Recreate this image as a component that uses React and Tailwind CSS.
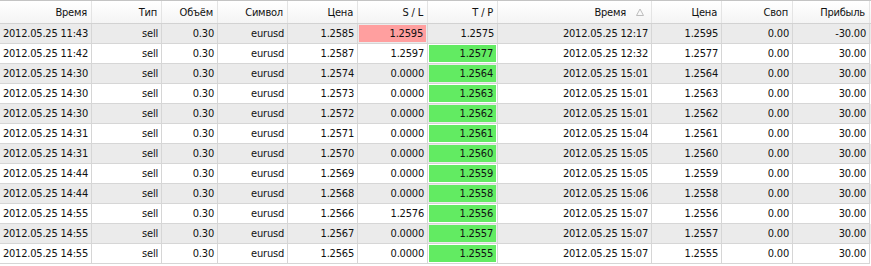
const cols = [
  { title: "Время", w: "w-[92px]" },
  { title: "Тип", w: "w-[70px]" },
  { title: "Объём", w: "w-[56px]" },
  { title: "Символ", w: "w-[70px]" },
  { title: "Цена", w: "w-[70px]" },
  { title: "S / L", w: "w-[70px]" },
  { title: "T / P", w: "w-[70px]" },
  { title: "Время", w: "w-[154px]", sorted: true },
  { title: "Цена", w: "w-[70px]" },
  { title: "Своп", w: "w-[71px]" },
  { title: "Прибыль", w: "w-[77px]" },
];

const trades = [
  ["11:43", "1.2585", "1.2595", "1.2575", "12:17", "1.2595", "-30.00", "sl"],
  ["11:42", "1.2587", "1.2597", "1.2577", "12:32", "1.2577", "30.00", "tp"],
  ["14:30", "1.2574", "0.0000", "1.2564", "15:01", "1.2564", "30.00", "tp"],
  ["14:30", "1.2573", "0.0000", "1.2563", "15:01", "1.2563", "30.00", "tp"],
  ["14:30", "1.2572", "0.0000", "1.2562", "15:01", "1.2562", "30.00", "tp"],
  ["14:31", "1.2571", "0.0000", "1.2561", "15:04", "1.2561", "30.00", "tp"],
  ["14:31", "1.2570", "0.0000", "1.2560", "15:05", "1.2560", "30.00", "tp"],
  ["14:44", "1.2569", "0.0000", "1.2559", "15:05", "1.2559", "30.00", "tp"],
  ["14:44", "1.2568", "0.0000", "1.2558", "15:06", "1.2558", "30.00", "tp"],
  ["14:55", "1.2566", "1.2576", "1.2556", "15:07", "1.2556", "30.00", "tp"],
  ["14:55", "1.2567", "0.0000", "1.2557", "15:07", "1.2557", "30.00", "tp"],
  ["14:55", "1.2565", "0.0000", "1.2555", "15:07", "1.2555", "30.00", "tp"],
];

function Cell({ w, children, hit }) {
  return (
    <div className={`${w} h-5 shrink-0 border-r border-b border-[#d6d6d6] flex`}>
      <div
        className={`flex-1 flex items-center justify-end pr-[3px] whitespace-nowrap ${
          hit === "sl" ? "m-px bg-[#ff9f9f]" : hit === "tp" ? "m-px bg-[#62eb62]" : "px-px"
        }`}
      >
        {children}
      </div>
    </div>
  );
}

export default function App() {
  return (
    <div className="w-[871px] h-[266px] bg-white text-[11px] tracking-[-0.2px] text-[#111] font-['DejaVu_Sans_Condensed','DejaVu_Sans',sans-serif] leading-none">
      <div className="flex h-6 border-t border-[#c4c4c4] border-b border-b-[#d2d2d2] bg-gradient-to-b from-white to-[#f4f4f4]">
        {cols.map((c, i) => (
          <div key={i} className={`${c.w} shrink-0 border-r border-[#e4e4e4] flex items-center justify-end pr-1 whitespace-nowrap`}>
            <span>{c.title}</span>
            {c.sorted && (
              <svg width="8" height="8" viewBox="0 0 8 8" className="ml-[10px] mr-[3px]">
                <path d="M0.5 7.5 L4 1 L7.5 7.5 Z" fill="none" stroke="#bcbcbc" strokeWidth="1" />
              </svg>
            )}
          </div>
        ))}
      </div>
      {trades.map((t, i) => (
        <div key={i} className={`flex ${i % 2 === 0 ? "bg-[#ebebeb]" : "bg-white"}`}>
          <Cell w={cols[0].w}>2012.05.25 {t[0]}</Cell>
          <Cell w={cols[1].w}>sell</Cell>
          <Cell w={cols[2].w}>0.30</Cell>
          <Cell w={cols[3].w}>eurusd</Cell>
          <Cell w={cols[4].w}>{t[1]}</Cell>
          <Cell w={cols[5].w} hit={t[7] === "sl" ? "sl" : null}>{t[2]}</Cell>
          <Cell w={cols[6].w} hit={t[7] === "tp" ? "tp" : null}>{t[3]}</Cell>
          <Cell w={cols[7].w}>2012.05.25 {t[4]}</Cell>
          <Cell w={cols[8].w}>{t[5]}</Cell>
          <Cell w={cols[9].w}>0.00</Cell>
          <Cell w={cols[10].w}>{t[6]}</Cell>
        </div>
      ))}
    </div>
  );
}
